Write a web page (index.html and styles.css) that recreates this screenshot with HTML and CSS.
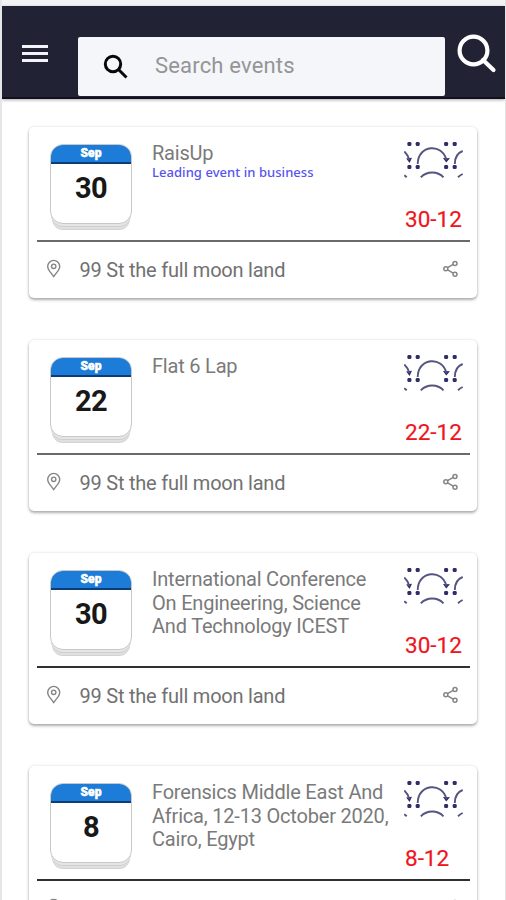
FILE: index.html
```html
<!DOCTYPE html>
<html lang="en">
<head>
<meta charset="utf-8">
<title>Events</title>
<link rel="stylesheet" href="styles.css">
</head>
<body>
<svg class="defs" aria-hidden="true">
  <symbol id="pattern" viewBox="0 0 60 40">
    <g fill="#2f2d68">
      <rect x="3.4" y="2" width="4" height="4" rx="1.3"/><rect x="11.7" y="2" width="4" height="4" rx="1.3"/>
      <rect x="40.1" y="2" width="4" height="4" rx="1.3"/><rect x="48.7" y="2" width="4" height="4" rx="1.3"/>
      <rect x="3.4" y="25" width="4" height="4" rx="1.3"/><rect x="11.7" y="25" width="4" height="4" rx="1.3"/>
      <rect x="40.1" y="25" width="4" height="4" rx="1.3"/><rect x="48.7" y="25" width="4" height="4" rx="1.3"/>
      <path d="M2.2 18.5l5.8-.8-2.4 5.2zM39 18l7 .2-3.8 4.4z"/>
    </g>
    <g fill="none" stroke="#55537f" stroke-width="1.9">
      <path d="M13.7 24C13.7 4.5 39 3 42.3 20M.3 11.5C3 14 4.5 17 5.4 20M50.8 24C50.8 18 53.5 13 58.7 11M16.8 37.3C23 30.9 33.5 30.9 39.5 37.3M.3 35.2l2.4 2M54 37.2C55.5 35.8 57 34.8 58.7 34"/>
    </g>
  </symbol>
  <symbol id="pin" viewBox="0 0 16 20">
    <path d="M7.7 17.6C5 13.5 1.7 11 1.7 7.4a6 6 0 0 1 12 0C13.7 11 10.4 13.5 7.7 17.6z"/><circle cx="7.7" cy="7.3" r="2.2"/>
  </symbol>
  <symbol id="share" viewBox="0 0 18 18">
    <circle cx="3.8" cy="8.8" r="2"/><circle cx="13" cy="3.4" r="2"/><circle cx="13" cy="14.2" r="2"/><path d="M5.6 7.7l5.6-3.3M5.6 9.9l5.6 3.3"/>
  </symbol>
</svg>
<div class="screen">
  <header class="bar">
    <svg class="menu" viewBox="0 0 26 20"><path d="M0 2.5h26M0 9.5h26M0 16.5h26"/></svg>
    <div class="search">
      <svg class="search-icon" viewBox="0 0 26 26"><circle cx="10" cy="10" r="7.7"/><path d="M15.500 15.500l8 8"/></svg>
      <span>Search events</span>
    </div>
    <svg class="find" viewBox="0 0 40 40"><circle cx="16.500" cy="16.500" r="13.900"/><path d="M26 26l10.500 10"/></svg>
  </header>
  <main class="list">
    <article class="card">
      <div class="top">
        <div class="cal"><div class="page"><div class="month">Sep</div><div class="day">30</div></div></div>
        <div class="info"><h2>RaisUp</h2><p>Leading event in business</p></div>
        <div class="side"><svg class="pattern"><use href="#pattern"/></svg><span class="date">30-12</span></div>
      </div>
      <div class="foot"><svg class="pin"><use href="#pin"/></svg><span>99 St the full moon land</span><svg class="share"><use href="#share"/></svg></div>
    </article>
    <article class="card">
      <div class="top">
        <div class="cal"><div class="page"><div class="month">Sep</div><div class="day">22</div></div></div>
        <div class="info"><h2>Flat 6 Lap</h2></div>
        <div class="side"><svg class="pattern"><use href="#pattern"/></svg><span class="date">22-12</span></div>
      </div>
      <div class="foot"><svg class="pin"><use href="#pin"/></svg><span>99 St the full moon land</span><svg class="share"><use href="#share"/></svg></div>
    </article>
    <article class="card dark-rule">
      <div class="top">
        <div class="cal"><div class="page"><div class="month">Sep</div><div class="day">30</div></div></div>
        <div class="info"><h2>International Conference<br>On Engineering, Science<br>And Technology ICEST</h2></div>
        <div class="side"><svg class="pattern"><use href="#pattern"/></svg><span class="date">30-12</span></div>
      </div>
      <div class="foot"><svg class="pin"><use href="#pin"/></svg><span>99 St the full moon land</span><svg class="share"><use href="#share"/></svg></div>
    </article>
    <article class="card dark-rule">
      <div class="top">
        <div class="cal"><div class="page"><div class="month">Sep</div><div class="day">8</div></div></div>
        <div class="info"><h2>Forensics Middle East And<br>Africa, 12-13 October 2020,<br>Cairo, Egypt</h2></div>
        <div class="side"><svg class="pattern"><use href="#pattern"/></svg><span class="date">8-12</span></div>
      </div>
      <div class="foot"><svg class="pin"><use href="#pin"/></svg><svg class="share"><use href="#share"/></svg></div>
    </article>
  </main>
</div>
</body>
</html>
```
FILE: styles.css
```css
* { box-sizing: border-box; }
body { margin: 0; background: #f3f3f3; font-family: Roboto, sans-serif; }
svg { display: block; flex: none; }
.defs { display: none; }
.screen {
  height: 900px;
  overflow: hidden;
  padding-top: 6px;
  border-left: 2px solid #e6e6e8;
  border-right: 1px solid #e2e2e4;
}
.bar {
  display: flex;
  align-items: flex-start;
  height: 93px;
  padding: 0 8px 0 20px;
  background: #212335;
  border-bottom: 2px solid #10101e;
  box-shadow: 0 1px 3px rgba(0, 0, 0, .35);
  position: relative;
}
.menu { width: 26px; height: 20px; margin-top: 38px; fill: none; stroke: #f2f4fa; stroke-width: 3; }
.search {
  display: flex;
  align-items: center;
  width: 367px;
  height: 59px;
  margin: 31px 0 0 30px;
  padding-left: 25px;
  background: #f4f6fa;
  border-radius: 2px;
  color: #959595;
  font-size: 22px;
  line-height: 26px;
  letter-spacing: .18px;
}
.search-icon { width: 26px; height: 26px; margin-right: 26px; fill: none; stroke: #080808; stroke-width: 3; }
.search span { margin-top: -1px; }
.find { width: 40px; height: 40px; margin: 28px 0 0 12px; fill: none; stroke: #fff; stroke-width: 4.2; stroke-linecap: round; }
.list {
  display: flex;
  flex-direction: column;
  gap: 42px;
  height: 820px;
  padding: 28px 28px 0 27px;
  background: #fff;
}
.card {
  flex: none;
  height: 171px;
  padding: 0 7px 0 8px;
  background: #fff;
  border-radius: 5px;
  box-shadow: 0 2px 3px rgba(0, 0, 0, .3), 0 0 3px rgba(0, 0, 0, .12);
}
.top { display: flex; height: 115px; padding-left: 13px; border-bottom: 2px solid #6a6a6c; }
.dark-rule .top { border-color: #303033; }
.cal {
  flex: none;
  width: 82px;
  height: 80px;
  margin-top: 17px;
}
.page {
  height: 80px;
  overflow: hidden;
  border: 1px solid #c8c8c8;
  border-radius: 13px;
  background: #fff;
  box-shadow: 0 3px 0 -1px #e6e6e6, 0 4px 0 -1px #cfcfcf, 0 7px 0 -2px #e0e0e0, 0 8px 0 -2px #d2d2d2;
}
.month {
  height: 19px;
  background: #1c7cd8;
  border-bottom: 2px solid #0b3d78;
  color: #fff;
  font-size: 12px;
  font-weight: 900;
  line-height: 17px;
  text-align: center;
  -webkit-text-stroke: .5px #fff;
}
.day { color: #181818; font-size: 29px; font-weight: 700; line-height: 33px; margin-top: 8px; text-align: center; letter-spacing: -.7px; }
.info { flex: none; width: 272px; padding: 15px 0 0 20px; white-space: nowrap; }
.info h2 { margin: 0; color: #7a7a7a; font-size: 20px; font-weight: 400; line-height: 23.7px; letter-spacing: -.2px; }
.info p { margin: -2px 0 0; color: #5654f0; font-family: "Noto Sans", sans-serif; font-size: 13px; font-weight: 500; line-height: 16px; letter-spacing: .05px; }
.side { display: flex; flex: none; flex-direction: column; width: 60px; padding-top: 13px; }
.pattern { width: 60px; height: 40px; }
.date { margin: 26px 0 0 1px; color: #f01420; font-size: 22.5px; line-height: 27px; white-space: nowrap; -webkit-text-stroke: .2px #f01420; }
.foot { display: flex; align-items: center; justify-content: space-between; height: 56px; padding: 0 9px; color: #717171; font-size: 20px; line-height: 24px; letter-spacing: -.22px; }
.foot span { flex: 1; margin: 0 0 0 17.5px; }
.pin { width: 16px; height: 20px; margin-bottom: 2px; fill: none; stroke: #858585; stroke-width: 1.4; }
.share { width: 18px; height: 18px; margin: 0 1px 2px 0; fill: none; stroke: #858585; stroke-width: 1.5; }
```
